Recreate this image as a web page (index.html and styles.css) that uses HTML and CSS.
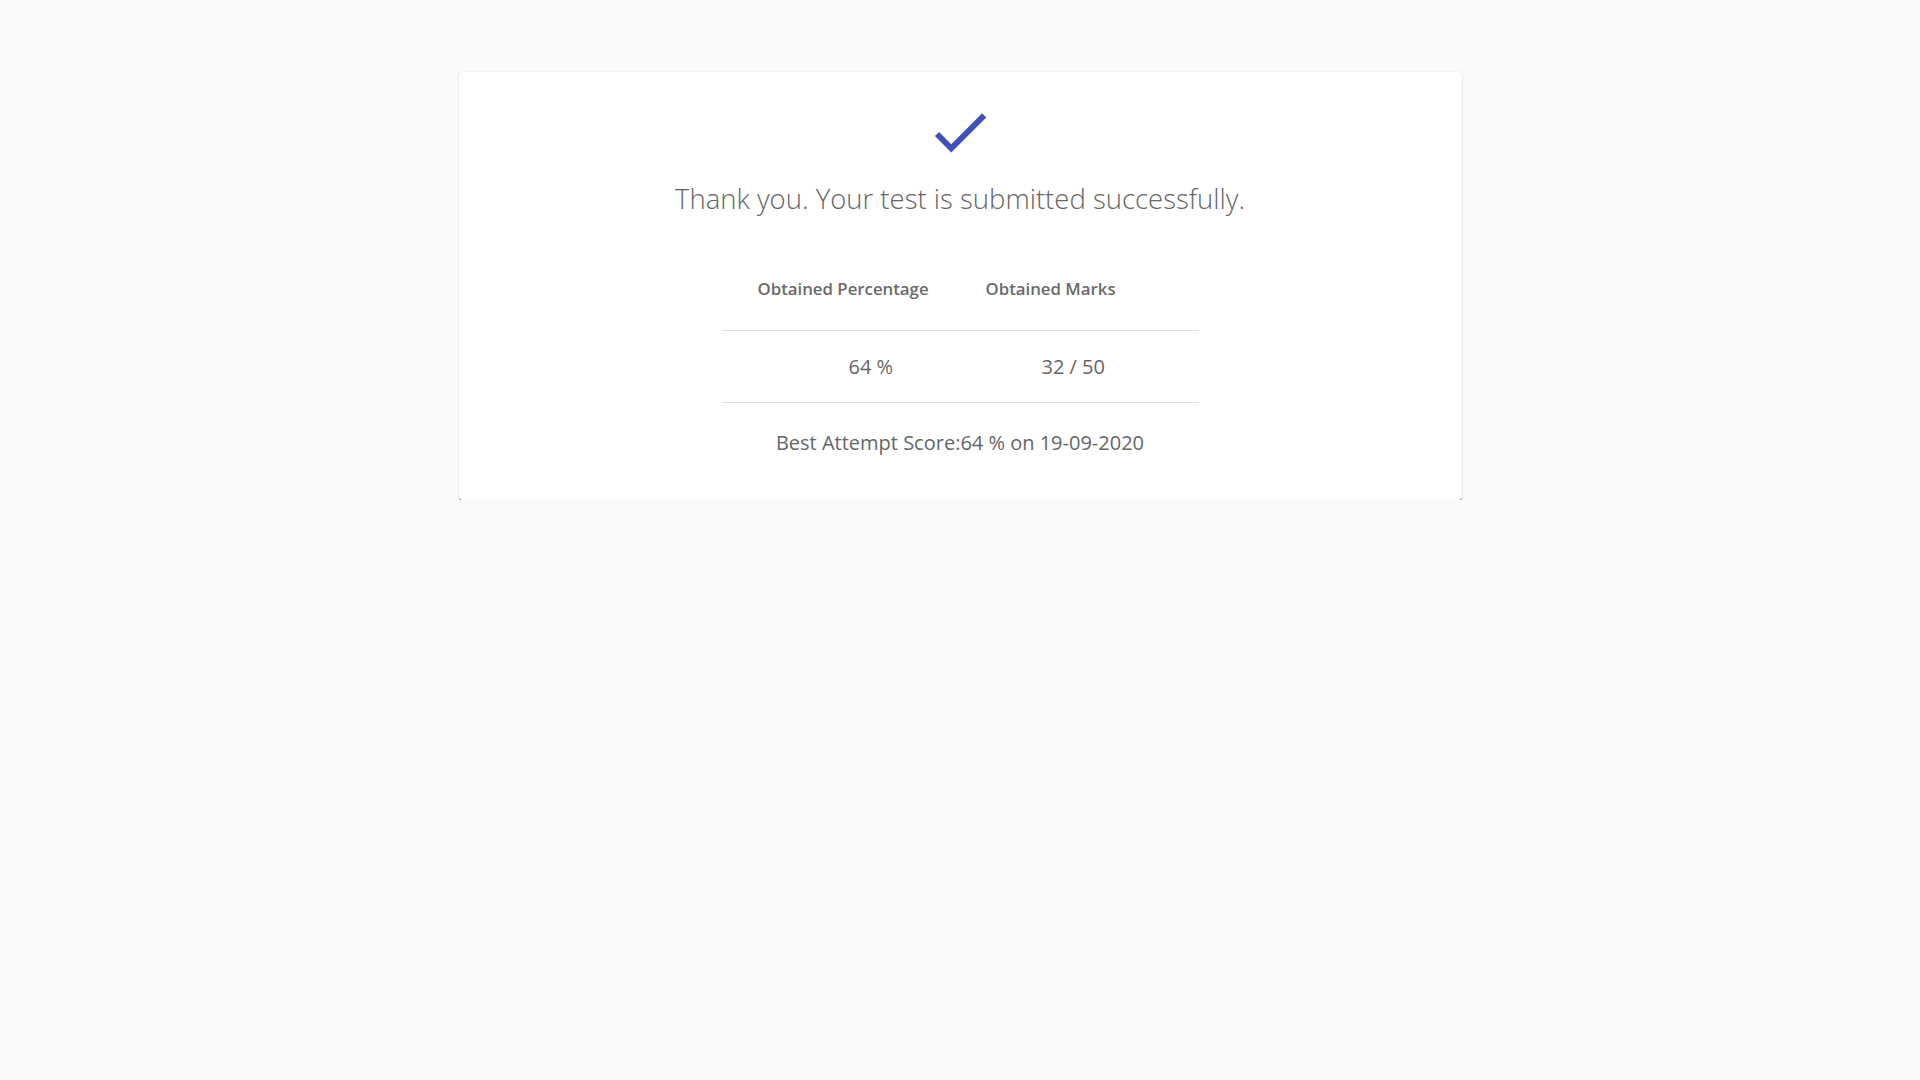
FILE: index.html
```html
<!DOCTYPE html>
<html lang="en">
<head>
<meta charset="utf-8">
<title>Test submitted</title>
<link rel="stylesheet" href="styles.css">
</head>
<body>
<main class="card">
  <svg class="check" viewBox="0 0 24 24" width="70" height="70" aria-hidden="true">
    <path d="M9 16.17L4.83 12l-1.42 1.41L9 19 21 7l-1.41-1.41z"/>
  </svg>
  <h1 class="title">Thank you. Your test is submitted successfully.</h1>
  <div class="results">
    <div class="row head">
      <div class="cell c1">Obtained Percentage</div>
      <div class="cell c2">Obtained Marks</div>
    </div>
    <div class="row data">
      <div class="cell c1">64 %</div>
      <div class="cell c2">32 / 50</div>
    </div>
  </div>
  <p class="best">Best Attempt Score:64 % on 19-09-2020</p>
</main>
</body>
</html>
```
FILE: styles.css
```css
html, body {
  margin: 0;
  padding: 0;
  background: #fafafa;
  font-family: "Open Sans", "Liberation Sans", sans-serif;
  color: #666;
}

.card {
  width: 1003px;
  margin: 72px auto 0;
  padding: 25px 0 45px;
  background: #fff;
  border-radius: 4px;
  box-shadow: 0 2px 0 -0.5px rgba(0,0,0,.45), 0 1px 2px 0 rgba(0,0,0,.14), 0 0 2px 0 rgba(0,0,0,.1);
  box-sizing: border-box;
}

.check {
  display: block;
  margin: 0 auto;
  fill: #3f51b5;
}

.title {
  margin: 14px 0 0;
  font-size: 27.5px;
  font-weight: 300;
  line-height: 36px;
  text-align: center;
  color: #666;
}

.results {
  width: 477px;
  margin: 37px auto 0;
}

.row {
  display: flex;
  border-bottom: 1px solid #e0e0e0;
}

.c1 { width: 228px; }
.c2 { width: 249px; }

.head {
  height: 77px;
  box-sizing: border-box;
  padding-top: 25px;
}

.head .cell {
  padding-left: 36px;
  box-sizing: border-box;
  font-size: 16.8px;
  font-weight: 600;
  line-height: 20px;
  color: #6a6a6a;
}

.data {
  padding: 24px 0 23px;
}

.data .cell {
  font-size: 20px;
  line-height: 24px;
  box-sizing: border-box;
}

.data .c1 { padding-left: 127px; }
.data .c2 { padding-left: 92px; }

.best {
  margin: 0;
  padding-top: 28px;
  font-size: 20px;
  line-height: 24px;
  text-align: center;
}
```
